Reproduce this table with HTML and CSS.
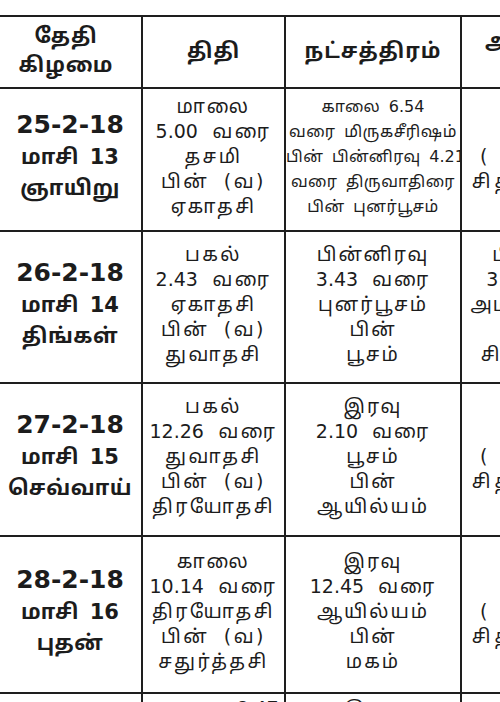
FILE: index.html
```html
<!DOCTYPE html>
<html lang="ta">
<head>
<meta charset="utf-8">
<title>பஞ்சாங்கம்</title>
<link rel="stylesheet" href="styles.css">
</head>
<body>
<table class="cal">
  <colgroup>
    <col class="c-date">
    <col class="c-tithi">
    <col class="c-star">
    <col class="c-yoga">
  </colgroup>
  <tr class="head">
    <th class="h-date">தேதி<br>கிழமை</th>
    <th>திதி</th>
    <th>நட்சத்திரம்</th>
    <th class="h-yoga">அமிர்தாதி யோகம்</th>
  </tr>
  <tr class="r1">
    <td class="date"><span class="num">25-2-18</span><br>மாசி <span class="n">13</span><br>ஞாயிறு</td>
    <td class="tithi">மாலை<br><span class="n">5.00</span> வரை<br>தசமி<br>பின் (வ)<br>ஏகாதசி</td>
    <td class="star small">காலை <span class="n">6.54</span><br>வரை மிருகசீரிஷம்<br>பின் பின்னிரவு <span class="n">4.21</span><br>வரை திருவாதிரை<br>பின் புனர்பூசம்</td>
    <td class="yoga">பகல்<br><span class="p">( மரணயோகம்)</span><br><span class="w">சித்தயோகம்</span></td>
  </tr>
  <tr class="r2">
    <td class="date"><span class="num">26-2-18</span><br>மாசி <span class="n">14</span><br>திங்கள்</td>
    <td class="tithi">பகல்<br><span class="n">2.43</span> வரை<br>ஏகாதசி<br>பின் (வ)<br>துவாதசி</td>
    <td class="star">பின்னிரவு<br><span class="n">3.43</span> வரை<br>புனர்பூசம்<br>பின்<br>பூசம்</td>
    <td class="yoga">பின்னிரவு<br><span class="n">3.43</span> வரை<br>அமிர்தயோகம்<br>பின்<br>சித்தயோகம்</td>
  </tr>
  <tr class="r3">
    <td class="date"><span class="num">27-2-18</span><br>மாசி <span class="n">15</span><br>செவ்வாய்</td>
    <td class="tithi">பகல்<br><span class="n">12.26</span> வரை<br>துவாதசி<br>பின் (வ)<br>திரயோதசி</td>
    <td class="star">இரவு<br><span class="n">2.10</span> வரை<br>பூசம்<br>பின்<br>ஆயில்யம்</td>
    <td class="yoga">நாள்<br><span class="p">( மரணயோகம்)</span><br><span class="w">சித்தயோகம்</span></td>
  </tr>
  <tr class="r4">
    <td class="date"><span class="num">28-2-18</span><br>மாசி <span class="n">16</span><br>புதன்</td>
    <td class="tithi">காலை<br><span class="n">10.14</span> வரை<br>திரயோதசி<br>பின் (வ)<br>சதுர்த்தசி</td>
    <td class="star">இரவு<br><span class="n">12.45</span> வரை<br>ஆயில்யம்<br>பின்<br>மகம்</td>
    <td class="yoga">நாள்<br><span class="p">( மரணயோகம்)</span><br><span class="w">சித்தயோகம்</span></td>
  </tr>
  <tr class="r5">
    <td class="date"></td>
    <td class="tithi top">காலை <span class="n">8.47</span><br>வரை</td>
    <td class="star top">இரவு<br><span class="n">11.02</span> வரை</td>
    <td class="yoga top">நாள்</td>
  </tr>
</table>
</body>
</html>
```
FILE: styles.css
```css
html, body {
  margin: 0;
  padding: 0;
  background: #ffffff;
  overflow: hidden;
  width: 500px;
  height: 702px;
}

.cal {
  border-collapse: collapse;
  table-layout: fixed;
  width: 633px;
  margin-top: 15px;
  margin-left: -3px;
  color: #1c1c1c;
  font-family: "DejaVu Sans", "Noto Sans Tamil", "Lohit Tamil", sans-serif;
}

.c-date { width: 144px; }
.c-tithi { width: 143px; }
.c-star { width: 176px; }
.c-yoga { width: 170px; }

.cal th,
.cal td {
  border: 2px solid #1e1e1e;
  padding: 0 0 6px 0;
  text-align: center;
  vertical-align: middle;
  overflow: hidden;
  white-space: nowrap;
}

.head { height: 72px; }
.r1 { height: 143px; }
.r2 { height: 152px; }
.r3 { height: 153px; }
.r4 { height: 157px; }
.r5 { height: 80px; }

.head th {
  font-size: 21px;
  font-weight: bold;
  line-height: 29px;
  letter-spacing: 1px;
  padding-bottom: 2px;
}

.head .h-date {
  padding-right: 8px;
}

.head .h-yoga {
  text-align: left;
  vertical-align: top;
  padding: 10px 0 0 23px;
}

.date {
  font-size: 21px;
  font-weight: bold;
  line-height: 31px;
  letter-spacing: 0.5px;
  word-spacing: 3px;
}

.date .num {
  font-size: 25px;
  letter-spacing: 0;
}

.tithi,
.star,
.yoga {
  font-size: 19px;
  line-height: 25px;
  letter-spacing: 2.5px;
  word-spacing: 6px;
}

.star {
  letter-spacing: 2px;
}

.yoga {
  letter-spacing: 1px;
  word-spacing: 14px;
}

.yoga .p {
  letter-spacing: 0;
  word-spacing: 24px;
  padding-left: 18px;
}

.yoga .w {
  letter-spacing: 4px;
}

.n {
  letter-spacing: 0;
}

.star.small {
  font-size: 16px;
  letter-spacing: 0.5px;
  word-spacing: 3px;
}

.r5 .top {
  vertical-align: top;
  padding-top: 4px;
  line-height: 21px;
}
```
